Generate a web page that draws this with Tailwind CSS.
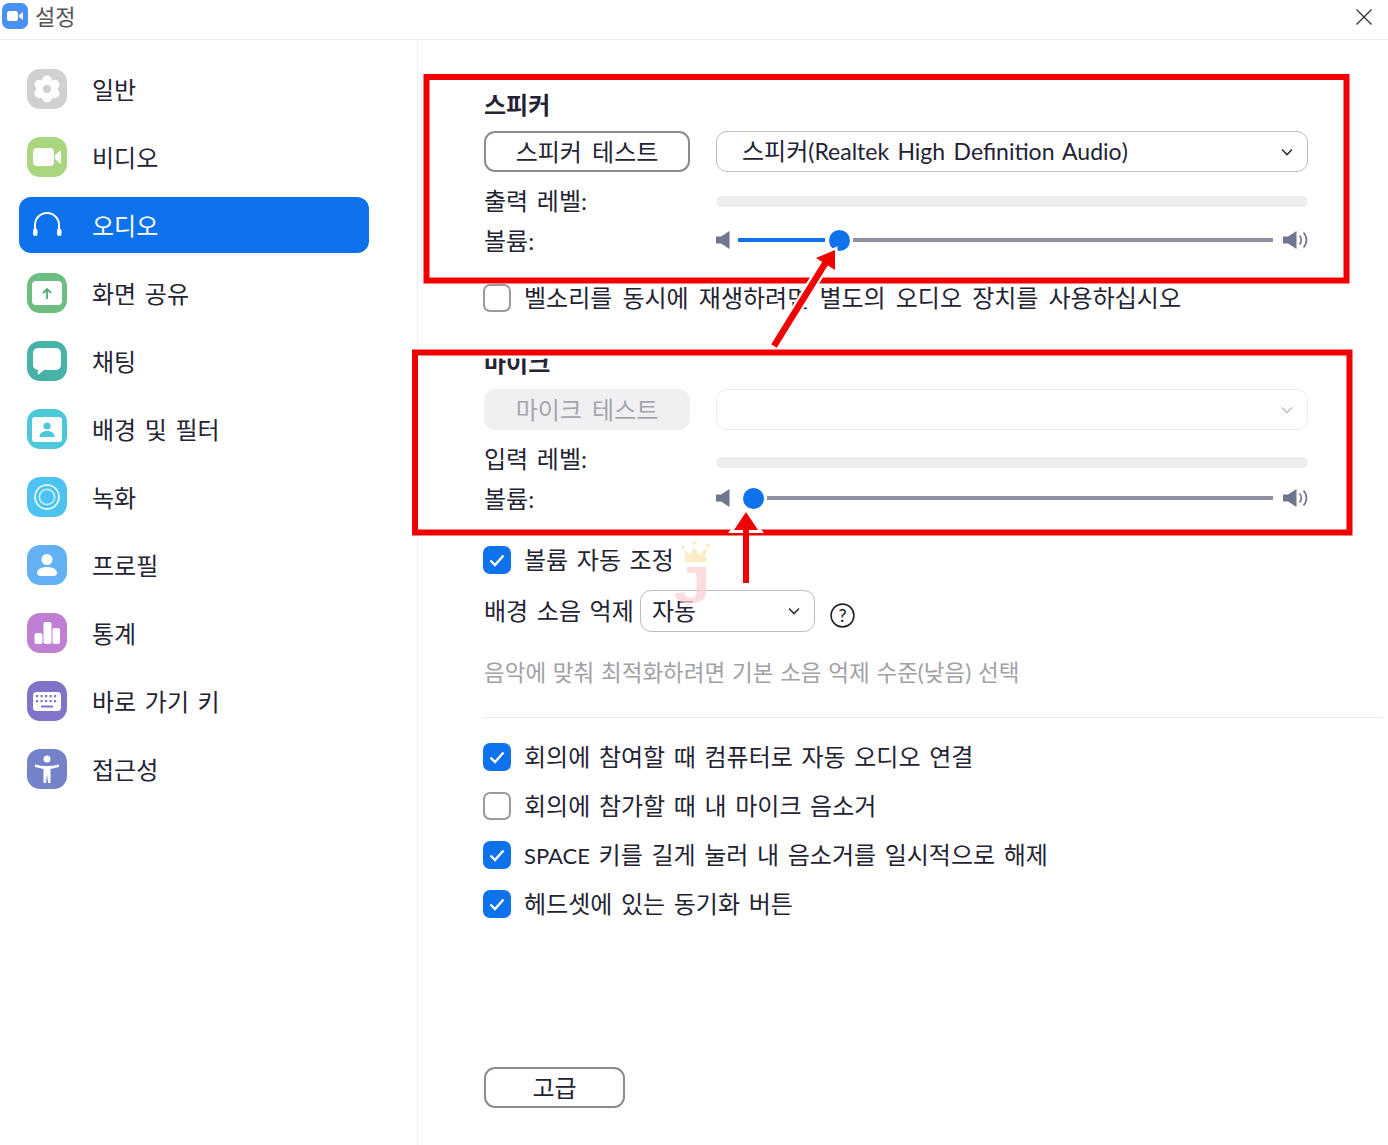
<!DOCTYPE html>
<html lang="ko">
<head>
<meta charset="utf-8">
<title>설정</title>
<script src="https://cdn.jsdelivr.net/npm/@tailwindcss/browser@4"></script>
</head>
<body class="m-0 bg-white">
<div class="relative w-[1388px] h-[1145px] overflow-hidden bg-white text-[24px] leading-[30px] text-[#232333] [word-spacing:2.5px] font-['Lato','Noto_Sans_CJK_KR',sans-serif]">

  <!-- title bar -->
  <header class="h-10 border-b border-[#ececec] flex items-center pl-[2px] pr-[16px]">
    <svg class="w-[26px] h-[26px] -mt-[7px]" viewBox="0 0 26 26"><rect width="26" height="26" rx="7" fill="#4a90f5"/><rect x="5" y="8" width="11" height="10" rx="2.5" fill="#fff"/><path d="M17 12l4-3v8l-4-3z" fill="#fff"/></svg>
    <span class="ml-[7px] -mt-[6px] text-[22px] text-[#555]">설정</span>
    <svg class="ml-auto -mt-[6px] w-4 h-4" viewBox="0 0 16 16"><path d="M.5.5l15 15M15.5.5l-15 15" stroke="#333" stroke-width="1.3" fill="none"/></svg>
  </header>

  <div class="flex h-[1105px]">
    <!-- sidebar -->
    <nav class="w-[418px] shrink-0 border-r border-[#f0f0f0] pt-[21px] flex flex-col gap-3">
      <a class="ml-[19px] w-[350px] h-14 pl-2 flex items-center gap-[25px]">
        <svg class="w-10 h-10" viewBox="0 0 40 40"><rect width="40" height="40" rx="13" fill="#d0d0d0"/><g fill="#fff"><circle cx="20" cy="11.5" r="5"/><circle cx="20" cy="28.5" r="5"/><circle cx="12.6" cy="15.7" r="5"/><circle cx="27.4" cy="15.7" r="5"/><circle cx="12.6" cy="24.3" r="5"/><circle cx="27.4" cy="24.3" r="5"/><circle cx="20" cy="20" r="8"/></g><circle cx="20" cy="20" r="4.2" fill="#d0d0d0"/></svg>
        <span class="mt-[2px]">일반</span>
      </a>
      <a class="ml-[19px] w-[350px] h-14 pl-2 flex items-center gap-[25px]">
        <svg class="w-10 h-10" viewBox="0 0 40 40"><rect width="40" height="40" rx="13" fill="#abd680"/><rect x="6" y="11" width="21" height="18" rx="4" fill="#fff"/><path d="M28 18l6-5v14l-6-5z" fill="#fff"/></svg>
        <span class="mt-[2px]">비디오</span>
      </a>
      <a class="ml-[19px] w-[350px] h-14 pl-2 flex items-center gap-[25px] bg-[#0e72ed] rounded-xl text-white">
        <svg class="w-10 h-10" viewBox="0 0 40 40" fill="none"><path d="M8 25v-5a12 12 0 0 1 24 0v5" stroke="#fff" stroke-width="2"/><rect x="6" y="23.500" width="4.500" height="7.500" rx="2.200" fill="#fff"/><rect x="30" y="23.500" width="4.500" height="7.500" rx="2.200" fill="#fff"/></svg>
        <span class="mt-[2px]">오디오</span>
      </a>
      <a class="ml-[19px] w-[350px] h-14 pl-2 flex items-center gap-[25px]">
        <svg class="w-10 h-10" viewBox="0 0 40 40"><rect width="40" height="40" rx="13" fill="#6dbe80"/><rect x="5" y="8" width="30" height="24" rx="4" fill="#fff"/><path d="M20 26v-10M16 20l4-4 4 4" stroke="#4caf72" stroke-width="1.8" fill="none"/></svg>
        <span class="mt-[2px]">화면 공유</span>
      </a>
      <a class="ml-[19px] w-[350px] h-14 pl-2 flex items-center gap-[25px]">
        <svg class="w-10 h-10" viewBox="0 0 40 40"><rect width="40" height="40" rx="13" fill="#47b3a8"/><path d="M11 7h18a5 5 0 0 1 5 5v12a5 5 0 0 1-5 5H17l-5.500 4.500a.5.500 0 0 1-.8-.4L11 29a5 5 0 0 1-5-5V12a5 5 0 0 1 5-5z" fill="#fff"/></svg>
        <span class="mt-[2px]">채팅</span>
      </a>
      <a class="ml-[19px] w-[350px] h-14 pl-2 flex items-center gap-[25px]">
        <svg class="w-10 h-10" viewBox="0 0 40 40"><rect width="40" height="40" rx="13" fill="#4cc8d8"/><rect x="5" y="8" width="30" height="25" rx="3" fill="#fff"/><circle cx="20" cy="17" r="3.600" fill="#4cc8d8"/><path d="M12.500 28c0-4 3-6 7.500-6s7.500 2 7.500 6z" fill="#4cc8d8"/></svg>
        <span class="mt-[2px]">배경 및 필터</span>
      </a>
      <a class="ml-[19px] w-[350px] h-14 pl-2 flex items-center gap-[25px]">
        <svg class="w-10 h-10" viewBox="0 0 40 40"><rect width="40" height="40" rx="13" fill="#4cc3f1"/><circle cx="20" cy="20" r="12" fill="none" stroke="#fff" stroke-width="1.600"/><circle cx="20" cy="20" r="8.500" fill="#c3ecfa"/><circle cx="20" cy="20" r="6.800" fill="#4cc3f1"/></svg>
        <span class="mt-[2px]">녹화</span>
      </a>
      <a class="ml-[19px] w-[350px] h-14 pl-2 flex items-center gap-[25px]">
        <svg class="w-10 h-10" viewBox="0 0 40 40"><rect width="40" height="40" rx="13" fill="#63b0f5"/><circle cx="20" cy="14.500" r="5.500" fill="#fff"/><path d="M10 28c0-4 5-6 10-6s10 2 10 6c0 2-1.500 3-3.500 3h-13c-2 0-3.500-1-3.500-3z" fill="#fff"/></svg>
        <span class="mt-[2px]">프로필</span>
      </a>
      <a class="ml-[19px] w-[350px] h-14 pl-2 flex items-center gap-[25px]">
        <svg class="w-10 h-10" viewBox="0 0 40 40"><rect width="40" height="40" rx="13" fill="#bf7fd2"/><g fill="#fff"><rect x="7.500" y="20" width="8" height="11" rx="2"/><rect x="16.500" y="9" width="8" height="22" rx="2"/><rect x="25.500" y="15" width="7.500" height="16" rx="2"/></g></svg>
        <span class="mt-[2px]">통계</span>
      </a>
      <a class="ml-[19px] w-[350px] h-14 pl-2 flex items-center gap-[25px]">
        <svg class="w-10 h-10" viewBox="0 0 40 40"><rect width="40" height="40" rx="13" fill="#8074c8"/><rect x="6" y="11" width="28" height="19" rx="3.500" fill="#fff"/><g fill="#8074c8"><rect x="9" y="14" width="2.200" height="2.200"/><rect x="13.500" y="14" width="2.200" height="2.200"/><rect x="18" y="14" width="2.200" height="2.200"/><rect x="22.500" y="14" width="2.200" height="2.200"/><rect x="27" y="14" width="2.200" height="2.200"/><rect x="9" y="19" width="2.200" height="2.200"/><rect x="13.500" y="19" width="2.200" height="2.200"/><rect x="18" y="19" width="2.200" height="2.200"/><rect x="22.500" y="19" width="2.200" height="2.200"/><rect x="27" y="19" width="2.200" height="2.200"/><rect x="14" y="24.500" width="12" height="2"/></g></svg>
        <span class="mt-[2px]">바로 가기 키</span>
      </a>
      <a class="ml-[19px] w-[350px] h-14 pl-2 flex items-center gap-[25px]">
        <svg class="w-10 h-10" viewBox="0 0 40 40"><rect width="40" height="40" rx="13" fill="#7581c9"/><circle cx="20" cy="10" r="3.500" fill="#fff"/><path d="M8 15.500c4 1 8 1.500 12 1.500s8-.5 12-1.500v2.500l-8.500 2v14h-2.500l-1-9-1 9h-2.500v-14l-8.500-2z" fill="#fff"/></svg>
        <span class="mt-[2px]">접근성</span>
      </a>
    </nav>

    <!-- main -->
    <main class="flex-1 pl-[66px] pr-[5px] pt-[50px] flex flex-col">
      <h2 class="h-[30px] font-bold">스피커</h2>
      <div class="mt-[11px] w-[824px] flex gap-[26px]">
        <button class="w-[206px] h-[41px] border-2 border-[#8c8c8c] rounded-[11px] flex items-center justify-center [word-spacing:4px]">스피커 테스트</button>
        <div class="w-[592px] h-[41px] border border-[#bdbdbd] rounded-[11px] pl-[25px] pr-[13px] flex items-center justify-between">
          <span class="-mt-[2px]">스피커<span class="text-[23px]">(Realtek High Definition Audio)</span></span>
          <svg class="w-[14px] h-[14px]" viewBox="0 0 14 14"><path d="M2 4.500l5 5 5-5" stroke="#333" stroke-width="1.600" fill="none"/></svg>
        </div>
      </div>
      <div class="mt-[14px] h-[30px] w-[824px] flex items-center">
        <span class="w-[232px]">출력 레벨:</span>
        <div class="w-[592px] h-[11px] rounded-full bg-[#efefef]"></div>
      </div>
      <div class="mt-[10px] h-[30px] w-[824px] flex items-center">
        <span class="w-[232px]">볼륨:</span>
        <div class="w-[592px] flex items-center -mt-[2px]">
          <svg class="w-[14px] h-[18px] shrink-0" viewBox="0 0 14 18"><path d="M0 5.500h5L13.500 0v18L5 12.500H0z" fill="#6e7690"/></svg>
          <div class="ml-2 w-[87px] h-[3.500px] bg-[#0e72ed]"></div>
          <div class="ml-1 w-[21px] h-[21px] rounded-full bg-[#0e72ed] shrink-0"></div>
          <div class="ml-[3px] w-[420px] h-[3.500px] bg-[#8f8fa3]"></div>
          <svg class="ml-[10px] w-[25px] h-[18px] shrink-0" viewBox="0 0 25 18"><path d="M0 5.500h5L13.500 0v18L5 12.500H0z" fill="#6e7690"/><path d="M16.500 4.500a6.500 6.500 0 0 1 0 9M20.500 1.500a11 11 0 0 1 0 15" stroke="#6e7690" stroke-width="1.700" fill="none"/></svg>
        </div>
      </div>
      <label class="-ml-px mt-[28px] h-7 flex items-center gap-[13px]">
        <span class="w-7 h-7 border-2 border-[#9a9a9a] rounded-[7px] shrink-0"></span>
        <span class="[word-spacing:4px]">벨소리를 동시에 재생하려면 별도의 오디오 장치를 사용하십시오</span>
      </label>

      <h2 class="mt-[36px] h-[30px] font-bold">마이크</h2>
      <div class="mt-[11px] w-[824px] flex gap-[26px]">
        <button class="w-[206px] h-[41px] bg-[#f0f0f3] text-[#a5a5ad] rounded-[11px] flex items-center justify-center [word-spacing:4px]">마이크 테스트</button>
        <div class="w-[592px] h-[41px] border border-[#ececec] rounded-[11px] pr-[13px] flex items-center justify-end">
          <svg class="w-[14px] h-[14px]" viewBox="0 0 14 14"><path d="M2 4.500l5 5 5-5" stroke="#c4c4c4" stroke-width="1.600" fill="none"/></svg>
        </div>
      </div>
      <div class="mt-[14px] h-[30px] w-[824px] flex items-center">
        <span class="w-[232px]">입력 레벨:</span>
        <div class="mt-[7px] w-[592px] h-[11px] rounded-full bg-[#efefef]"></div>
      </div>
      <div class="mt-[10px] h-[30px] w-[824px] flex items-center">
        <span class="w-[232px]">볼륨:</span>
        <div class="w-[592px] flex items-center -mt-[2px]">
          <svg class="w-[14px] h-[18px] shrink-0" viewBox="0 0 14 18"><path d="M0 5.500h5L13.500 0v18L5 12.500H0z" fill="#6e7690"/></svg>
          <div class="ml-[13px] w-[21px] h-[21px] rounded-full bg-[#0e72ed] shrink-0"></div>
          <div class="ml-[3px] w-[506px] h-[3.500px] bg-[#8f8fa3]"></div>
          <svg class="ml-[10px] w-[25px] h-[18px] shrink-0" viewBox="0 0 25 18"><path d="M0 5.500h5L13.500 0v18L5 12.500H0z" fill="#6e7690"/><path d="M16.500 4.500a6.500 6.500 0 0 1 0 9M20.500 1.500a11 11 0 0 1 0 15" stroke="#6e7690" stroke-width="1.700" fill="none"/></svg>
        </div>
      </div>
      <label class="-ml-px mt-[32px] h-7 flex items-center gap-[13px]">
        <svg class="w-7 h-7 shrink-0" viewBox="0 0 28 28"><rect width="28" height="28" rx="7" fill="#0e72ed"/><path d="M7.500 14.500l4.500 4.500 8.500-9.500" stroke="#fff" stroke-width="2.400" fill="none"/></svg>
        <span>볼륨 자동 조정</span>
      </label>
      <div class="mt-[16px] h-[42px] flex items-center">
        <span class="w-[156px]">배경 소음 억제</span>
        <div class="w-[175px] h-[42px] border border-[#bdbdbd] rounded-[11px] pl-[11px] pr-[13px] flex items-center justify-between">
          <span>자동</span>
          <svg class="w-[14px] h-[14px]" viewBox="0 0 14 14"><path d="M2 4.500l5 5 5-5" stroke="#333" stroke-width="1.600" fill="none"/></svg>
        </div>
        <svg class="ml-[15px] mt-[8px] w-[25px] h-[25px]" viewBox="0 0 25 25"><circle cx="12.500" cy="12.500" r="11.400" fill="none" stroke="#222" stroke-width="1.600"/><text x="12.500" y="19" text-anchor="middle" font-size="18" font-weight="500" fill="#222">?</text></svg>
      </div>
      <p class="mt-[26px] h-[30px] text-[22.500px] text-[#a1a1a6] whitespace-nowrap [word-spacing:1px]">음악에 맞춰 최적화하려면 기본 소음 억제 수준(낮음) 선택</p>
      <div class="-ml-px mt-[29px] h-px bg-[#ececec]"></div>
      <label class="-ml-px mt-[25px] h-7 flex items-center gap-[13px]">
        <svg class="w-7 h-7 shrink-0" viewBox="0 0 28 28"><rect width="28" height="28" rx="7" fill="#0e72ed"/><path d="M7.500 14.500l4.500 4.500 8.500-9.500" stroke="#fff" stroke-width="2.400" fill="none"/></svg>
        <span>회의에 참여할 때 컴퓨터로 자동 오디오 연결</span>
      </label>
      <label class="-ml-px mt-[21px] h-7 flex items-center gap-[13px]">
        <span class="w-7 h-7 border-2 border-[#9a9a9a] rounded-[7px] shrink-0"></span>
        <span>회의에 참가할 때 내 마이크 음소거</span>
      </label>
      <label class="-ml-px mt-[21px] h-7 flex items-center gap-[13px]">
        <svg class="w-7 h-7 shrink-0" viewBox="0 0 28 28"><rect width="28" height="28" rx="7" fill="#0e72ed"/><path d="M7.500 14.500l4.500 4.500 8.500-9.500" stroke="#fff" stroke-width="2.400" fill="none"/></svg>
        <span><span class="text-[22px]">SPACE</span> 키를 길게 눌러 내 음소거를 일시적으로 해제</span>
      </label>
      <label class="-ml-px mt-[21px] h-7 flex items-center gap-[13px]">
        <svg class="w-7 h-7 shrink-0" viewBox="0 0 28 28"><rect width="28" height="28" rx="7" fill="#0e72ed"/><path d="M7.500 14.500l4.500 4.500 8.500-9.500" stroke="#fff" stroke-width="2.400" fill="none"/></svg>
        <span>헤드셋에 있는 동기화 버튼</span>
      </label>
      <button class="mt-[149px] w-[141px] h-[41px] border-2 border-[#8c8c8c] rounded-[11px] flex items-center justify-center">고급</button>
    </main>
  </div>

  <!-- annotations drawn over the screenshot -->
  <svg class="absolute inset-0 w-[1388px] h-[1145px] pointer-events-none" viewBox="0 0 1388 1145" fill="none">
    <rect x="426.500" y="77" width="920" height="203.500" stroke="#f00000" stroke-width="6"/>
    <rect x="418" y="355" width="928" height="3.500" fill="#fff"/>
    <rect x="415" y="352.500" width="934.500" height="180" stroke="#f00000" stroke-width="6"/>
    <path d="M774 346L826 262" stroke="#fff" stroke-width="11"/>
    <path d="M835 250L816 258L835 270z" fill="#fff" stroke="#fff" stroke-width="5"/>
    <path d="M774 346L826 262" stroke="#f00000" stroke-width="6.500"/>
    <path d="M835 250L816 258L835 270z" fill="#f00000"/>
    <path d="M746 512L732 531H760z" fill="#fff" stroke="#fff" stroke-width="4"/>
    <path d="M746 528V583" stroke="#f00000" stroke-width="6"/>
    <path d="M746 512L734 530H758z" fill="#f00000"/>
    <!-- watermark -->
    <path d="M684 549l6 6 4-8 5 8 6-6 2 0-3 11h-18z M685 557h22v5h-22z" fill="#f8edc6"/>
    <circle cx="683" cy="547" r="2" fill="#f8edc6"/><circle cx="694" cy="543" r="2" fill="#f8edc6"/><circle cx="708" cy="546" r="2" fill="#f8edc6"/>
    <text transform="translate(692 603) scale(1.300 1)" text-anchor="middle" font-size="52" font-weight="700" fill="#f9d2d2" fill-opacity=".75" font-family="Liberation Sans">J</text>
  </svg>
</div>
</body>
</html>
